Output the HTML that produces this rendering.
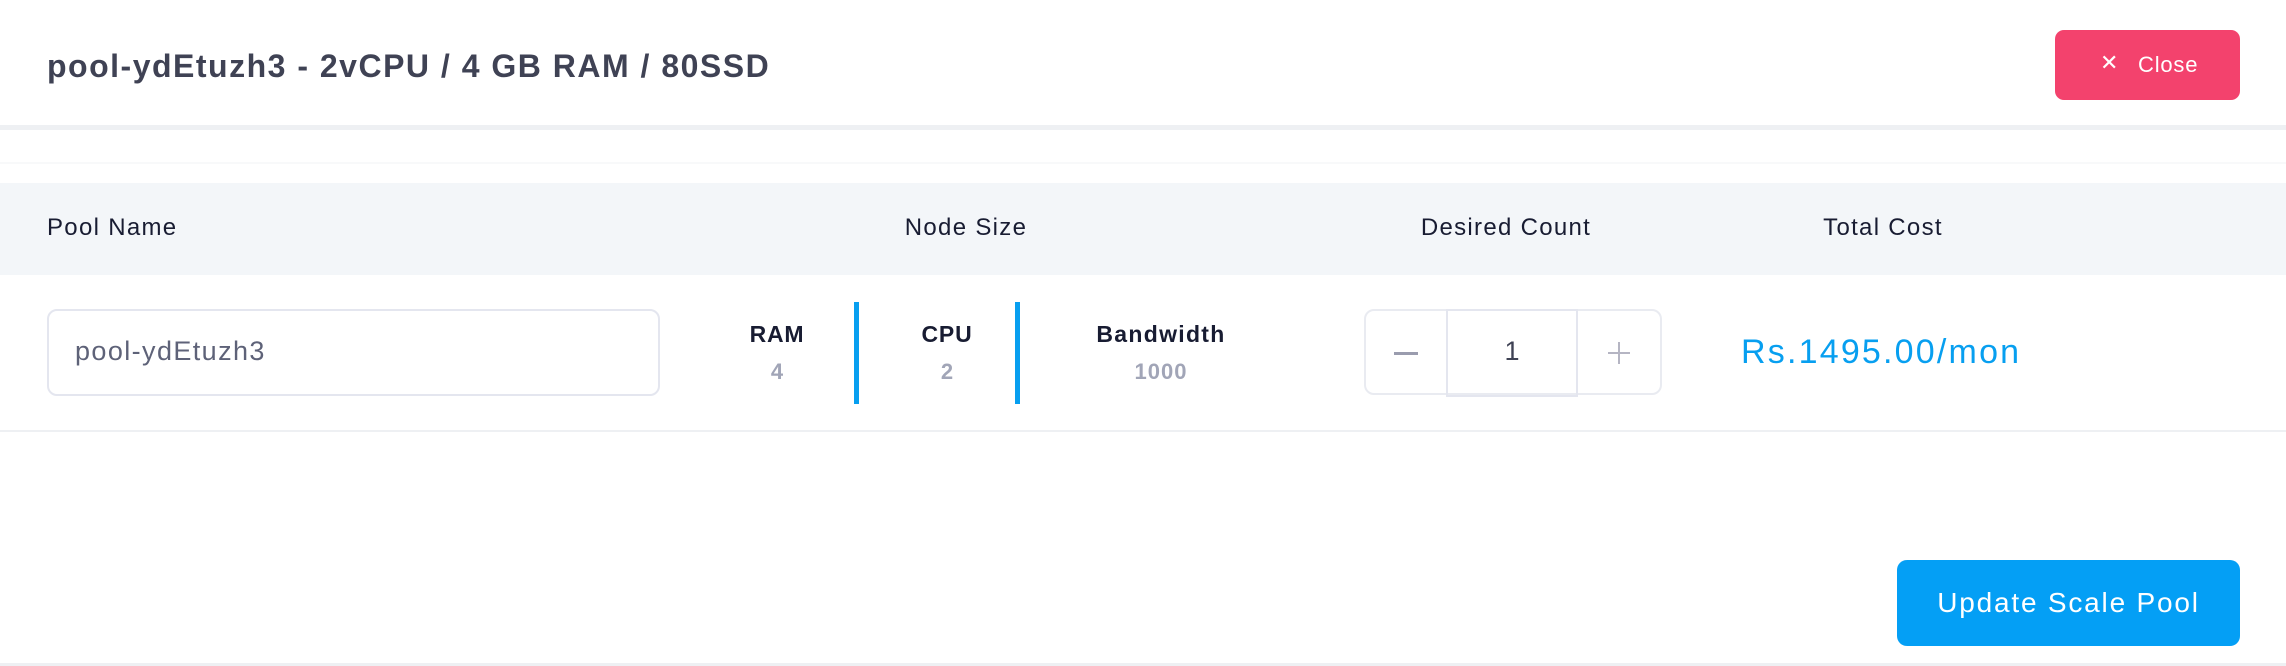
<!DOCTYPE html>
<html><head><meta charset="utf-8"><style>
*{margin:0;padding:0;box-sizing:border-box}
body{width:2286px;height:666px;background:#fff;font-family:"Liberation Sans",sans-serif;position:relative;overflow:hidden;color:#3f4254}
.a{position:absolute}
.c{transform:translateX(-50%);white-space:nowrap}
.h{font-size:24px;color:#181c32;letter-spacing:1.3px;top:214px}
</style></head><body>
<div class="a" style="left:47px;top:48px;font-size:32px;font-weight:700;color:#3f4254;letter-spacing:1.5px;white-space:nowrap">pool-ydEtuzh3 - 2vCPU / 4 GB RAM / 80SSD</div>
<div class="a" style="left:2055px;top:30px;width:185px;height:70px;background:#f3426d;border-radius:9px;color:#fff;font-size:22px">
 <span class="a" style="left:45px;top:20px;font-size:22px">✕</span>
 <span class="a" style="left:83px;top:22px;letter-spacing:0.8px">Close</span>
</div>
<div class="a" style="left:0;top:125px;width:2286px;height:5px;background:#eef0f3"></div>
<div class="a" style="left:0;top:162px;width:2286px;height:2px;background:#f8f9fa"></div>
<div class="a" style="left:0;top:183px;width:2286px;height:92px;background:#f3f6f9"></div>
<div class="a h" style="left:47px">Pool Name</div>
<div class="a c h" style="left:966px">Node Size</div>
<div class="a c h" style="left:1506px">Desired Count</div>
<div class="a c h" style="left:1883px">Total Cost</div>
<div class="a" style="left:47px;top:309px;width:613px;height:87px;border:2px solid #e4e6ef;border-radius:10px;font-size:27px;color:#5e6278;padding:25px 0 0 26px;letter-spacing:1.4px">pool-ydEtuzh3</div>
<div class="a c" style="left:777px;top:321px;font-size:23px;font-weight:700;color:#181c32;letter-spacing:0.8px">RAM</div>
<div class="a c" style="left:777px;top:359px;font-size:22px;font-weight:700;color:#a1a5b7">4</div>
<div class="a" style="left:854px;top:302px;width:5px;height:102px;background:#079ff0"></div>
<div class="a c" style="left:947px;top:321px;font-size:23px;font-weight:700;color:#181c32;letter-spacing:0.8px">CPU</div>
<div class="a c" style="left:947px;top:359px;font-size:22px;font-weight:700;color:#a1a5b7">2</div>
<div class="a" style="left:1015px;top:302px;width:5px;height:102px;background:#079ff0"></div>
<div class="a c" style="left:1161px;top:321px;font-size:23px;font-weight:700;color:#181c32;letter-spacing:1.3px">Bandwidth</div>
<div class="a c" style="left:1161px;top:359px;font-size:22px;font-weight:700;color:#a1a5b7;letter-spacing:1px">1000</div>
<div class="a" style="left:1364px;top:309px;width:298px;height:86px;border:2px solid #e9ebf1;border-radius:10px"></div>
<div class="a" style="left:1446px;top:309px;width:132px;height:88px;border:2px solid #e4e6ef"></div>
<div class="a" style="left:1394px;top:352px;width:24px;height:3px;background:#9a9cae"></div>
<div class="a c" style="left:1512px;top:336px;font-size:27px;color:#3f4254">1</div>
<div class="a" style="left:1608px;top:352px;width:22px;height:2px;background:#b5b5c3"></div>
<div class="a" style="left:1618px;top:342px;width:2px;height:22px;background:#b5b5c3"></div>
<div class="a" style="left:1741px;top:333px;font-size:34px;color:#079ff0;letter-spacing:2.2px;white-space:nowrap">Rs.1495.00/mon</div>
<div class="a" style="left:0;top:430px;width:2286px;height:2px;background:#eef0f3"></div>
<div class="a" style="left:1897px;top:560px;width:343px;height:86px;background:#049ff5;border-radius:10px;color:#fff;font-size:28px;text-align:center;line-height:86px;letter-spacing:1.8px">Update Scale Pool</div>
<div class="a" style="left:0;top:663px;width:2286px;height:3px;background:#eef0f3"></div>
</body></html>
